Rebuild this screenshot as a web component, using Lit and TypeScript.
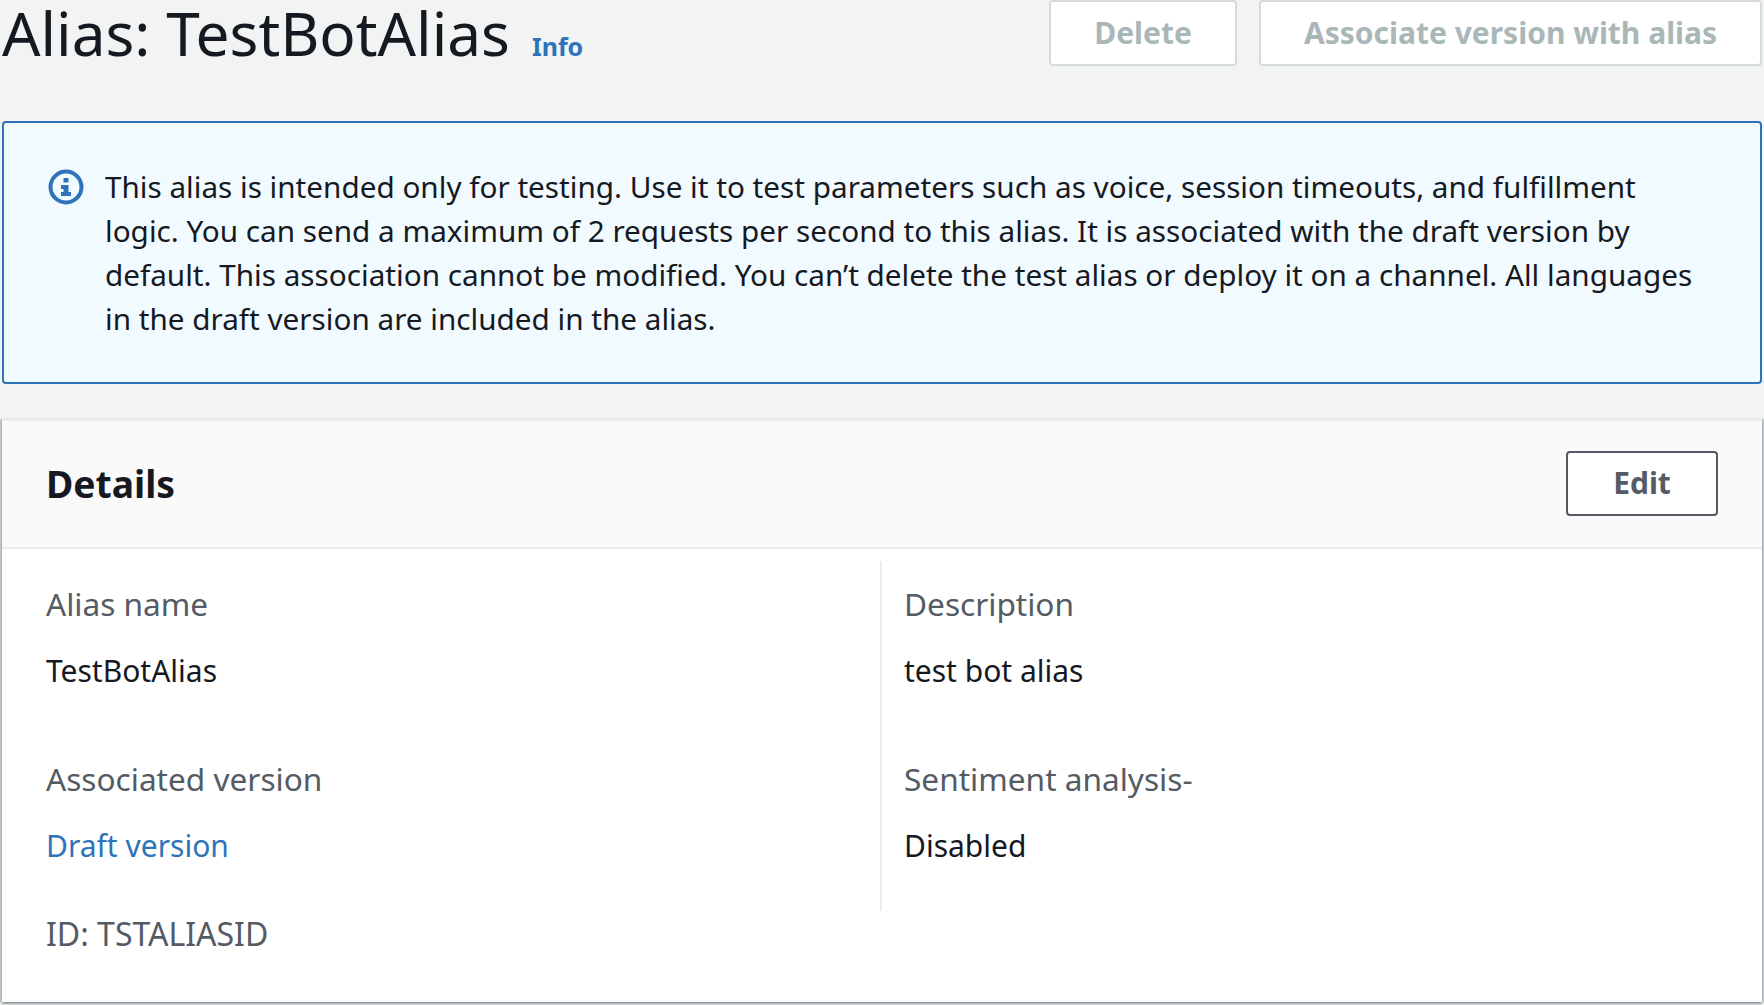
import { html, css, LitElement } from 'lit';
import { customElement } from 'lit/decorators.js';

@customElement('app-root')
export class AppRoot extends LitElement {
    static styles = css`
        :host {
          display: block;
          height: 1005px;
          overflow: hidden;
          background: #f2f3f3;
          font-family: "Noto Sans", "Open Sans", sans-serif;
          color: #16191f;
        }

        .page {
          padding: 0 2px;
        }

        .top {
          display: flex;
          justify-content: space-between;
          align-items: flex-start;
          height: 121px;
        }

        .heading {
          display: flex;
          align-items: baseline;
          gap: 22px;
        }

        h1 {
          font-weight: 400;
          font-size: 60.3px;
          line-height: 66px;
          margin: 0;
        }

        .info {
          font-size: 25px;
          font-weight: 700;
          color: #2e73b8;
        }

        .actions {
          display: flex;
          gap: 22px;
        }

        button {
          font-family: inherit;
          font-size: 30px;
          font-weight: 700;
          border-radius: 4px;
          background: #fff;
          box-sizing: border-box;
          height: 66px;
          padding: 0 0 2px;
        }

        .disabled {
          color: #aab7b8;
          border: 2px solid #d5dbdb;
        }

        .delete {
          width: 188px;
        }

        .associate {
          width: 503px;
        }

        .alert {
          display: flex;
          gap: 21px;
          box-sizing: border-box;
          height: 263px;
          padding: 42px 50px 0 44px;
          background: #f1faff;
          border: 2px solid #2e73b8;
          border-radius: 4px;
          font-size: 29.7px;
          line-height: 44px;
        }

        .alert svg {
          flex: none;
          width: 36px;
          height: 36px;
          margin-top: 4px;
        }

        .card {
          margin-top: 35px;
          height: 583px;
          background: #fff;
          box-shadow: 0 2px 2px 0 rgba(0, 28, 36, 0.4), 2px 0 1px 0 rgba(0, 28, 36, 0.18), -2px 0 1px 0 rgba(0, 28, 36, 0.18);
        }

        .card-head {
          display: flex;
          justify-content: space-between;
          align-items: center;
          box-sizing: border-box;
          height: 130px;
          padding: 0 44px 2px 44px;
          background: #fafafa;
          border-top: 2px solid #eaeded;
          border-bottom: 2px solid #eaeded;
        }

        h2 {
          font-size: 37.3px;
          font-weight: 700;
          margin: 0;
        }

        .edit {
          width: 152px;
          height: 65px;
          color: #545b64;
          border: 2px solid #545b64;
        }

        .cols {
          display: grid;
          grid-template-columns: 878px 1fr;
          margin-top: 12px;
        }

        .col {
          padding-left: 44px;
          height: 350px;
        }

        .col + .col {
          padding-left: 22px;
          border-left: 2px solid #eaeded;
        }

        .label {
          font-size: 31.6px;
          line-height: 44px;
          color: #545b64;
          margin-top: 21px;
        }

        .value {
          font-size: 30px;
          line-height: 44px;
          margin: 23px 0 0;
          height: 87px;
        }

        .link {
          color: #2e73b8;
        }

        .id {
          font-size: 32px;
          line-height: 44px;
          color: #545b64;
          margin: 1px 0 0 44px;
        }
    `;

    protected render() {
        return html`
            <div class="page">
                <div class="top">
                    <div class="heading">
                        <h1>Alias: TestBotAlias</h1>
                        <span class="info">Info</span>
                    </div>
                    <div class="actions">
                        <button class="disabled delete">Delete</button>
                        <button class="disabled associate">Associate version with alias</button>
                    </div>
                </div>
                <div class="alert">
                    <svg viewBox="0 0 36 36">
                        <circle cx="18" cy="18" r="15.5" fill="none" stroke="#2e73b8" stroke-width="4"></circle>
                        <rect x="15.5" y="9" width="5" height="4.5" fill="#2e73b8"></rect>
                        <path d="M13 16h7.5v7H23v4H13v-4h2.5v-3H13z" fill="#2e73b8"></path>
                    </svg>
                    <div>This alias is intended only for testing. Use it to test parameters such as voice, session timeouts, and fulfillment logic. You can send a maximum of 2 requests per second to this alias. It is associated with the draft version by default. This association cannot be modified. You can’t delete the test alias or deploy it on a channel. All languages in the draft version are included in the alias.</div>
                </div>
                <div class="card">
                    <div class="card-head">
                        <h2>Details</h2>
                        <button class="edit">Edit</button>
                    </div>
                    <div class="cols">
                        <div class="col">
                            <div class="label">Alias name</div>
                            <p class="value">TestBotAlias</p>
                            <div class="label">Associated version</div>
                            <p class="value link">Draft version</p>
                        </div>
                        <div class="col">
                            <div class="label">Description</div>
                            <p class="value">test bot alias</p>
                            <div class="label">Sentiment analysis-</div>
                            <p class="value">Disabled</p>
                        </div>
                    </div>
                    <div class="id">ID: TSTALIASID</div>
                </div>
            </div>
        `;
    }
}
